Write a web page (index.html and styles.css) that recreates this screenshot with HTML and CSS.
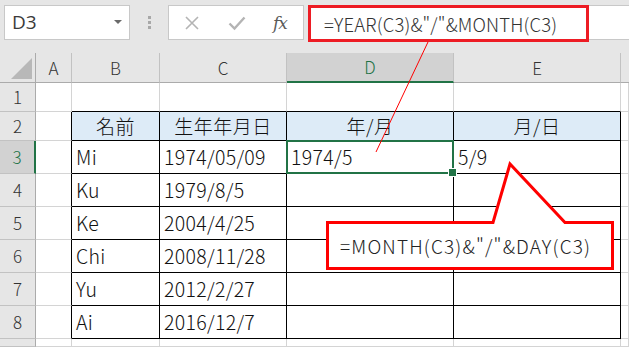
FILE: index.html
```html
<!DOCTYPE html>
<html lang="ja">
<head>
<meta charset="utf-8">
<title>Excel</title>
<link rel="stylesheet" href="styles.css">
</head>
<body>
<div class="app">
  <div class="toolbar">
    <div class="namebox">
      <span class="name">D3</span>
      <span class="dropdown"></span>
    </div>
    <div class="grip"><i></i><i></i><i></i></div>
    <div class="fxbox">
      <svg class="ico" width="16" height="16" viewBox="0 0 16 16"><path d="M2 2 L14 14 M14 2 L2 14" stroke="#b4b4b4" stroke-width="1.6" fill="none"/></svg>
      <svg class="ico" width="18" height="16" viewBox="0 0 18 16"><path d="M1.5 8.5 L6.5 13.5 L16.5 2.5" stroke="#b4b4b4" stroke-width="2.4" fill="none"/></svg>
      <span class="fx">fx</span>
    </div>
    <div class="formulabar">
      <div class="formula">=YEAR(C3)&amp;"/"&amp;MONTH(C3)</div>
    </div>
  </div>
  <div class="sheet">
    <div class="hd corner"><span class="tri"></span></div>
    <div class="hd col">A</div>
    <div class="hd col">B</div>
    <div class="hd col">C</div>
    <div class="hd col sel">D</div>
    <div class="hd col">E</div>
    <div class="hd col last"></div>

    <div class="hd row">1</div>
    <div class="c"></div>
    <div class="c bt"></div>
    <div class="c bt"></div>
    <div class="c bt"></div>
    <div class="c bt"></div>
    <div class="c"></div>

    <div class="hd row">2</div>
    <div class="c bl"></div>
    <div class="c t th">名前</div>
    <div class="c t th">生年年月日</div>
    <div class="c t th">年/月</div>
    <div class="c t th">月/日</div>
    <div class="c"></div>

    <div class="hd row rsel">3</div>
    <div class="c bl"></div>
    <div class="c t">Mi</div>
    <div class="c t">1974/05/09</div>
    <div class="c t active">1974/5</div>
    <div class="c t">5/9</div>
    <div class="c"></div>

    <div class="hd row">4</div>
    <div class="c bl"></div>
    <div class="c t">Ku</div>
    <div class="c t">1979/8/5</div>
    <div class="c t"></div>
    <div class="c t"></div>
    <div class="c"></div>

    <div class="hd row">5</div>
    <div class="c bl"></div>
    <div class="c t">Ke</div>
    <div class="c t">2004/4/25</div>
    <div class="c t"></div>
    <div class="c t"></div>
    <div class="c"></div>

    <div class="hd row">6</div>
    <div class="c bl"></div>
    <div class="c t">Chi</div>
    <div class="c t">2008/11/28</div>
    <div class="c t"></div>
    <div class="c t"></div>
    <div class="c"></div>

    <div class="hd row">7</div>
    <div class="c bl"></div>
    <div class="c t">Yu</div>
    <div class="c t">2012/2/27</div>
    <div class="c t"></div>
    <div class="c t"></div>
    <div class="c"></div>

    <div class="hd row">8</div>
    <div class="c bl"></div>
    <div class="c t">Ai</div>
    <div class="c t">2016/12/7</div>
    <div class="c t"></div>
    <div class="c t"></div>
    <div class="c"></div>

    <div class="hd row"></div>
    <div class="c"></div>
    <div class="c"></div>
    <div class="c"></div>
    <div class="c"></div>
    <div class="c"></div>
    <div class="c"></div>
  </div>

  <svg class="overlay" width="629" height="347" viewBox="0 0 629 347">
    <line x1="428" y1="42" x2="376" y2="152" stroke="#ff0000" stroke-width="1"/>
    <path d="M327.5 222.5 H493 L510 164 L565 222.5 H612.5 V268.5 H327.5 Z" fill="#ffffff" stroke="#ff0000" stroke-width="3" stroke-linejoin="miter"/>
  </svg>
  <div class="bubbletext">=MONTH(C3)&amp;"/"&amp;DAY(C3)</div>
</div>
</body>
</html>
```
FILE: styles.css
```css
* { box-sizing: border-box; }
html, body { margin: 0; padding: 0; }
body {
  width: 629px;
  height: 347px;
  overflow: hidden;
  background: #ffffff;
  font-family: "Noto Sans CJK JP", "Noto Sans", sans-serif;
  font-weight: 300;
  color: #222;
}
.app {
  position: relative;
  width: 629px;
  height: 347px;
  overflow: hidden;
}
.toolbar {
  height: 53px;
  background: #e6e6e6;
  display: flex;
  align-items: flex-start;
  padding: 5px 0 0 4px;
}
.namebox {
  width: 126px;
  height: 35px;
  background: #fff;
  border: 1px solid #c8c8c8;
  display: flex;
  align-items: center;
  justify-content: space-between;
  padding: 0 7px 0 7px;
}
.name {
  font-family: "Open Sans", "Noto Sans", sans-serif;
  font-weight: 400;
  font-size: 19px;
  color: #3a3a3a;
  line-height: 1;
}
.dropdown {
  width: 0;
  height: 0;
  border-left: 4px solid transparent;
  border-right: 4px solid transparent;
  border-top: 4px solid #6a6a6a;
  margin-top: -2px;
}
.grip {
  width: 38px;
  height: 35px;
  display: flex;
  flex-direction: column;
  align-items: center;
  justify-content: center;
  gap: 2px;
}
.grip i {
  display: block;
  width: 3px;
  height: 3px;
  background: #a8a8a8;
}
.fxbox {
  width: 136px;
  height: 35px;
  background: #fff;
  border: 1px solid #c8c8c8;
  display: flex;
  align-items: center;
  padding: 0 0 0 15px;
  gap: 28px;
}
.ico { display: block; }
.fx {
  font-family: "DejaVu Serif", "Liberation Serif", serif;
  font-style: italic;
  font-weight: 400;
  font-size: 17px;
  color: #5a5a5a;
  letter-spacing: -1px;
  margin-left: -1px;
}
.formulabar {
  margin-left: 4px;
  flex: 1;
  height: 35px;
  background: #fff;
  border-top: 1px solid #c8c8c8;
  border-bottom: 1px solid #c8c8c8;
  display: flex;
  align-items: flex-start;
}
.formula {
  width: 281px;
  height: 37px;
  margin-top: -1px;
  border: 3px solid #ed1c24;
  font-size: 18.5px;
  color: #333;
  padding-left: 13px;
  display: flex;
  align-items: center;
  background: #fff;
  white-space: nowrap;
  letter-spacing: 0.15px;
}

.sheet {
  display: grid;
  grid-template-columns: 36px 36px 88px 127px 167px 167px 1fr;
  grid-template-rows: 30px 29px 29px 33px 33px 33px 33px 33px 33px 1fr;
  height: 294px;
  background: #fff;
}
.hd {
  background: #e6e6e6;
  border-right: 1px solid #ababab;
  border-bottom: 1px solid #ababab;
  font-size: 17px;
  color: #333;
  display: flex;
  align-items: center;
  justify-content: center;
  padding-bottom: 1px;
}
.hd.col { border-right-color: #c2c2c2; }
.hd.col.last { border-right: none; }
.hd.row { border-bottom-color: #c2c2c2; }
.corner { position: relative; }
.tri {
  position: absolute;
  right: 3px;
  bottom: 3px;
  width: 0;
  height: 0;
  border-left: 21px solid transparent;
  border-bottom: 21px solid #b8b8b8;
}
.hd.sel {
  background: #d2d2d2;
  color: #217346;
  border-bottom: 2px solid #217346;
}
.hd.rsel {
  background: #d2d2d2;
  color: #217346;
  border-right: 2px solid #217346;
}
.c {
  border-right: 1px solid #d4d4d4;
  border-bottom: 1px solid #d4d4d4;
  font-size: 19.5px;
  color: #111;
  display: flex;
  align-items: center;
  padding: 0 0 2px 4px;
  white-space: nowrap;
  letter-spacing: 0.3px;
}
.c.bt { border-bottom-color: #000; }
.c.bl { border-right-color: #000; }
.c.t {
  border-right-color: #000;
  border-bottom-color: #000;
}
.c.th {
  background: #ddebf7;
  justify-content: center;
  padding-left: 0;
  font-size: 19px;
  letter-spacing: 0.5px;
}
.c.active { position: relative; }
.c.active::after {
  content: "";
  position: absolute;
  left: -1px;
  top: -1px;
  right: -1px;
  bottom: -1px;
  border: 2px solid #217346;
}
.c.active::before {
  content: "";
  position: absolute;
  right: -4px;
  bottom: -4px;
  width: 7px;
  height: 7px;
  background: #217346;
  border: 1px solid #fff;
  z-index: 2;
}

.overlay {
  position: absolute;
  left: 0;
  top: 0;
  pointer-events: none;
}
.bubbletext {
  position: absolute;
  left: 340px;
  top: 224px;
  height: 43px;
  display: flex;
  align-items: center;
  font-size: 19px;
  color: #222;
  white-space: nowrap;
  letter-spacing: 1.15px;
}
```
